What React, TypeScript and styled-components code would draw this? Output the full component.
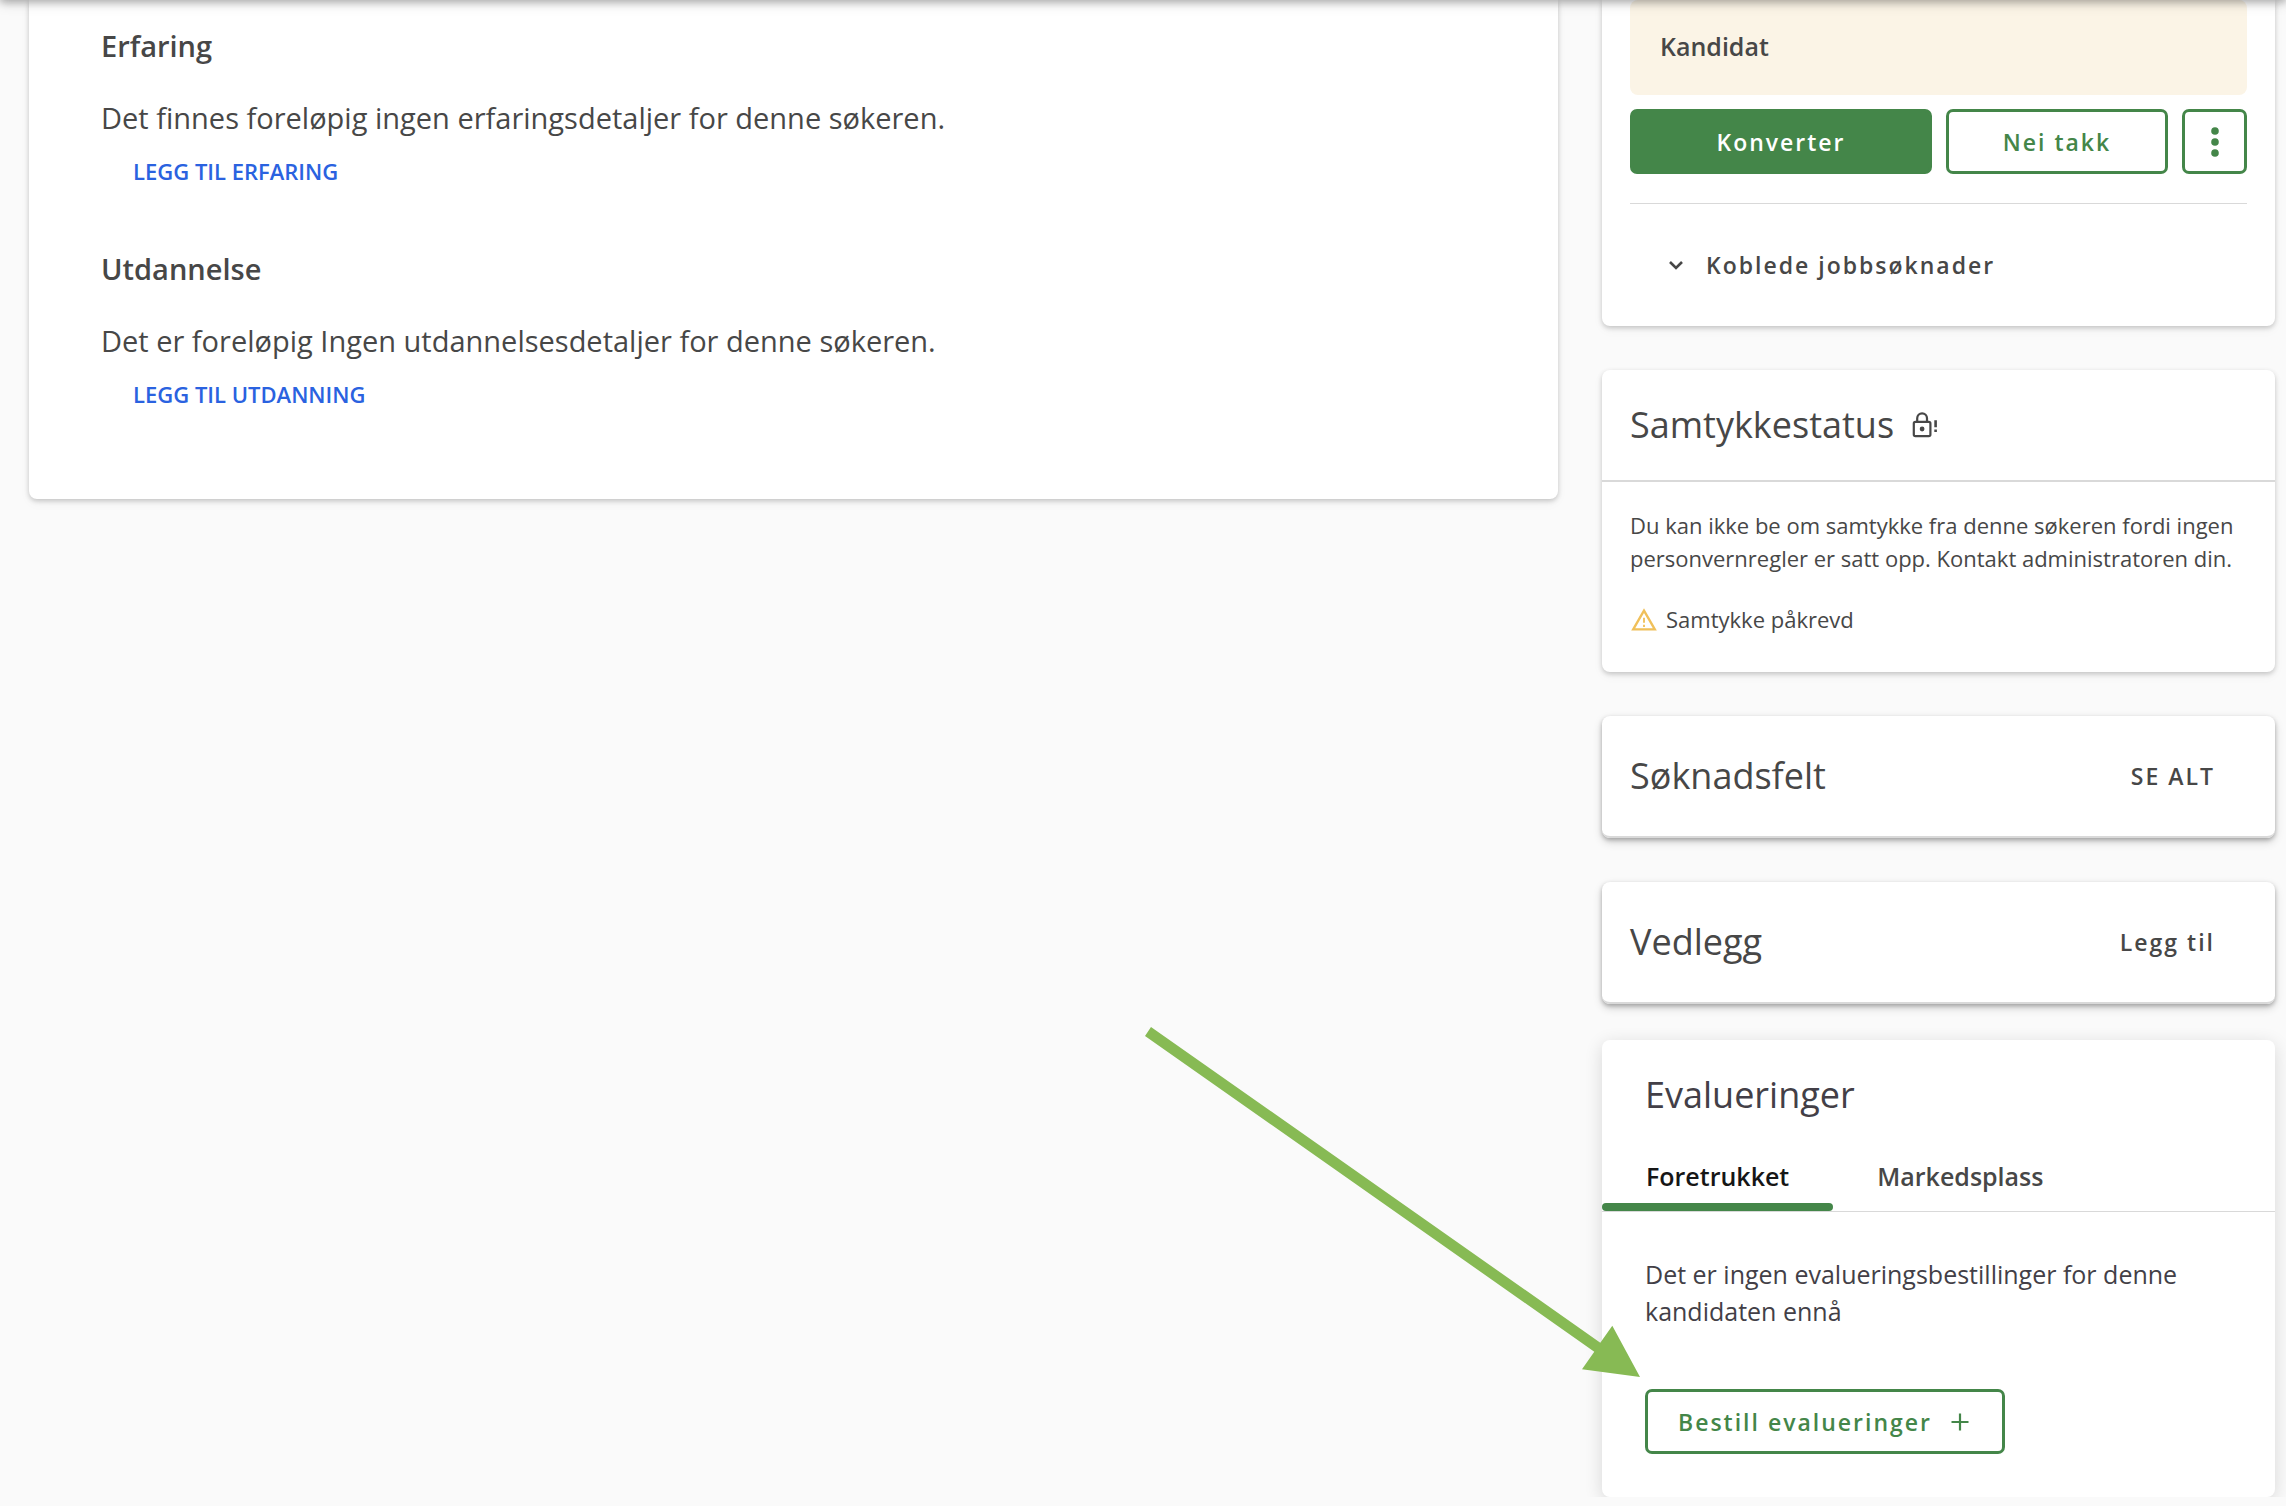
import React, { useState } from "react";
import styled, { createGlobalStyle } from "styled-components";

const green = "#448649";
const ink = "#474747";
const plum = "#433f47";
const line = "#d9d9d9";

const GlobalStyle = createGlobalStyle`
  *, *::before, *::after { box-sizing: border-box; }
  body {
    margin: 0;
    background: #fafafa;
    color: ${ink};
    font-family: "Open Sans", "Noto Sans", sans-serif;
  }
  h2, h3, p { margin: 0; }
  button { font-family: inherit; cursor: pointer; }
`;

const TopBar = styled.header`
  position: fixed;
  top: -64px;
  left: 0;
  right: 0;
  height: 64px;
  z-index: 2;
  background: #fff;
  box-shadow: 0 2px 8px rgba(0, 0, 0, 0.26), 0 4px 12px rgba(0, 0, 0, 0.13);
`;

const Page = styled.main`
  display: grid;
  grid-template-columns: minmax(0, 1fr) 673px;
  align-items: start;
  gap: 44px;
  padding: 0 11px 0 29px;
`;

const shadows = {
  soft: "0 2px 5px rgba(0, 0, 0, 0.2), 0 4px 12px rgba(0, 0, 0, 0.04)",
  strong: "0 2px 4px rgba(0, 0, 0, 0.26), 0 4px 10px rgba(0, 0, 0, 0.16)",
  wide: "0 4px 18px rgba(0, 0, 0, 0.14)",
};

const Card = styled.section<{ $shadow?: keyof typeof shadows; $cut?: boolean }>`
  background: #fff;
  border-radius: ${(p) => (p.$cut ? "0 0 8px 8px" : "8px")};
  box-shadow: ${(p) => shadows[p.$shadow ?? "soft"]};
`;

const ResumeCard = styled(Card)`
  display: flex;
  flex-direction: column;
  gap: 62px;
  padding: 26px 72px 89px;
`;

const SectionTitle = styled.h3`
  font-size: 29px;
  line-height: 40px;
  font-weight: 600;
`;

const Lead = styled.p`
  margin-top: 32px;
  font-size: 29px;
  line-height: 40px;
`;

const AddLink = styled.a`
  display: block;
  width: max-content;
  margin: 17px 0 0 32px;
  color: #2a62e0;
  font-size: 22px;
  line-height: 32px;
  font-weight: 600;
  text-decoration: none;
`;

const Sidebar = styled.aside`
  display: flex;
  flex-direction: column;
  gap: 44px;
`;

const StatusCard = styled(Card)`
  padding: 0 28px;
`;

const StatusBanner = styled.div`
  padding: 28px 30px 31px;
  border-radius: 8px;
  background: #fbf4e6;
  font-size: 25px;
  line-height: 36px;
  font-weight: 600;
`;

const ButtonRow = styled.div`
  display: flex;
  gap: 14px;
  padding: 14px 0 29px;
  border-bottom: 1px solid ${line};
`;

const Button = styled.button<{ $filled?: boolean; $width?: string }>`
  display: inline-flex;
  align-items: center;
  justify-content: center;
  gap: 16px;
  height: 65px;
  width: ${(p) => p.$width ?? "auto"};
  flex: ${(p) => (p.$filled ? "1" : "none")};
  padding: 0 30px;
  border: 3px solid ${green};
  border-radius: 7px;
  background: ${(p) => (p.$filled ? green : "#fff")};
  color: ${(p) => (p.$filled ? "#fff" : green)};
  font-size: 23px;
  line-height: 32px;
  font-weight: 600;
  letter-spacing: 2px;
`;

const IconButton = styled(Button)`
  padding: 0;
`;

const TextButton = styled.button`
  display: flex;
  align-items: center;
  gap: 20px;
  padding: 0 32px;
  border: 0;
  background: none;
  color: ${ink};
  font-size: 23px;
  line-height: 32px;
  font-weight: 600;
  letter-spacing: 2px;
`;

const LinkedToggle = styled(TextButton)`
  width: 100%;
  padding: 45px 36px;
`;

const CardHeader = styled.div<{ $tall?: boolean }>`
  display: flex;
  align-items: center;
  justify-content: ${(p) => (p.$tall ? "space-between" : "flex-start")};
  gap: 16px;
  padding: ${(p) => (p.$tall ? "36px 28px" : "31px 28px")};
  border-bottom: 2px solid ${line};
  border-radius: ${(p) => (p.$tall ? "8px" : "0")};
`;

const CardTitle = styled.h2<{ $color?: string }>`
  color: ${(p) => p.$color ?? ink};
  font-size: 36px;
  line-height: 48px;
  font-weight: 400;
`;

const ConsentBody = styled.div`
  display: grid;
  gap: 28px;
  padding: 27px 28px 36px;
  font-size: 22px;
  line-height: 33px;
`;

const Warning = styled.p`
  display: flex;
  align-items: center;
  gap: 8px;
`;

const EvaluationCard = styled(Card)`
  margin-top: -8px;
  padding-top: 31px;
`;

const EvaluationTitle = styled(CardTitle)`
  padding: 0 43px;
`;

const Tabs = styled.div`
  display: flex;
  margin-top: 39px;
  border-bottom: 1px solid ${line};
`;

const Tab = styled.button<{ $active: boolean }>`
  padding: 0 44px;
  border: 0;
  background: none;
  color: ${(p) => (p.$active ? "#161616" : ink)};
  font-size: 25px;
  line-height: 36px;
  font-weight: 600;
  &::after {
    content: "";
    display: block;
    height: 8px;
    margin: 9px -44px 0;
    border-radius: 4px;
    background: ${(p) => (p.$active ? green : "transparent")};
  }
`;

const EvaluationBody = styled.div`
  padding: 44px 43px 43px;
  color: ${plum};
  font-size: 25px;
  line-height: 37px;
`;

const OrderAction = styled.div`
  display: flex;
  position: relative;
  width: max-content;
  margin-top: 59px;
`;

const Pointer = styled.svg`
  position: absolute;
  right: 100%;
  bottom: 100%;
  z-index: 1;
  pointer-events: none;
`;

const resume = [
  {
    title: "Erfaring",
    text: "Det finnes foreløpig ingen erfaringsdetaljer for denne søkeren.",
    action: "LEGG TIL ERFARING",
  },
  {
    title: "Utdannelse",
    text: "Det er foreløpig Ingen utdannelsesdetaljer for denne søkeren.",
    action: "LEGG TIL UTDANNING",
  },
];

const LockAlertIcon = () => (
  <svg width="28" height="28" viewBox="0 0 28 28" fill="none" stroke={ink} strokeWidth="2.2" aria-hidden="true">
    <rect x="3.8" y="10.8" width="16.6" height="14.4" rx="1.6" />
    <path d="M7.2 10.5V7.3a4.9 4.9 0 0 1 9.8 0v3.2" />
    <circle cx="12.1" cy="18" r="2.4" fill={ink} stroke="none" />
    <path d="M25.6 9.2v7M25.6 18.4v2.6" strokeWidth="2.6" />
  </svg>
);

const WarningIcon = () => (
  <svg width="28" height="28" viewBox="0 0 24 24" fill="#f0c05a" aria-hidden="true">
    <path d="M12 5.99 19.53 19H4.47L12 5.99M12 2 1 21h22L12 2zm.8 14h-1.6v2h1.6v-2zm0-6h-1.6v4.4h1.6V10z" />
  </svg>
);

const ChevronIcon = () => (
  <svg width="20" height="20" viewBox="0 0 20 20" fill="none" stroke={ink} strokeWidth="2.6" aria-hidden="true">
    <path d="m4 7 6 6 6-6" />
  </svg>
);

const DotsIcon = () => (
  <svg width="32" height="32" viewBox="0 0 32 32" fill={green} aria-hidden="true">
    <circle cx="16" cy="5" r="3.8" />
    <circle cx="16" cy="16" r="3.8" />
    <circle cx="16" cy="27" r="3.8" />
  </svg>
);

const PlusIcon = () => (
  <svg width="24" height="24" viewBox="0 0 24 24" fill="none" stroke={green} strokeWidth="2.2" aria-hidden="true">
    <path d="M12 3.5v17M3.5 12h17" />
  </svg>
);

const tabs = ["Foretrukket", "Markedsplass"];

export default function App() {
  const [active, setActive] = useState(tabs[0]);
  return (
    <>
      <GlobalStyle />
      <TopBar />
      <Page>
        <ResumeCard $cut>
          {resume.map((s) => (
            <div key={s.title}>
              <SectionTitle>{s.title}</SectionTitle>
              <Lead>{s.text}</Lead>
              <AddLink href="#">{s.action}</AddLink>
            </div>
          ))}
        </ResumeCard>

        <Sidebar>
          <StatusCard $cut>
            <StatusBanner>Kandidat</StatusBanner>
            <ButtonRow>
              <Button $filled>Konverter</Button>
              <Button $width="222px">Nei takk</Button>
              <IconButton $width="65px" aria-label="Flere valg">
                <DotsIcon />
              </IconButton>
            </ButtonRow>
            <LinkedToggle aria-expanded="false">
              <ChevronIcon />
              Koblede jobbsøknader
            </LinkedToggle>
          </StatusCard>

          <Card>
            <CardHeader>
              <CardTitle>Samtykkestatus</CardTitle>
              <LockAlertIcon />
            </CardHeader>
            <ConsentBody>
              <p>
                Du kan ikke be om samtykke fra denne søkeren fordi ingen personvernregler er satt opp. Kontakt
                administratoren din.
              </p>
              <Warning>
                <WarningIcon />
                Samtykke påkrevd
              </Warning>
            </ConsentBody>
          </Card>

          <Card $shadow="strong">
            <CardHeader $tall>
              <CardTitle>Søknadsfelt</CardTitle>
              <TextButton>SE ALT</TextButton>
            </CardHeader>
          </Card>

          <Card $shadow="strong">
            <CardHeader $tall>
              <CardTitle>Vedlegg</CardTitle>
              <TextButton>Legg til</TextButton>
            </CardHeader>
          </Card>

          <EvaluationCard $shadow="wide">
            <EvaluationTitle $color={plum}>Evalueringer</EvaluationTitle>
            <Tabs role="tablist">
              {tabs.map((t) => (
                <Tab key={t} role="tab" aria-selected={t === active} $active={t === active} onClick={() => setActive(t)}>
                  {t}
                </Tab>
              ))}
            </Tabs>
            <EvaluationBody>
              <p>Det er ingen evalueringsbestillinger for denne kandidaten ennå</p>
              <OrderAction>
                <Pointer width="500" height="362" viewBox="0 0 500 362" fill="#87ba54" aria-hidden="true">
                  <path d="M6 0 455.3 315.7 467.3 298.7 495 350 437 342.3 449.3 324.7 0 9Z" />
                </Pointer>
                <Button>
                  Bestill evalueringer
                  <PlusIcon />
                </Button>
              </OrderAction>
            </EvaluationBody>
          </EvaluationCard>
        </Sidebar>
      </Page>
    </>
  );
}
